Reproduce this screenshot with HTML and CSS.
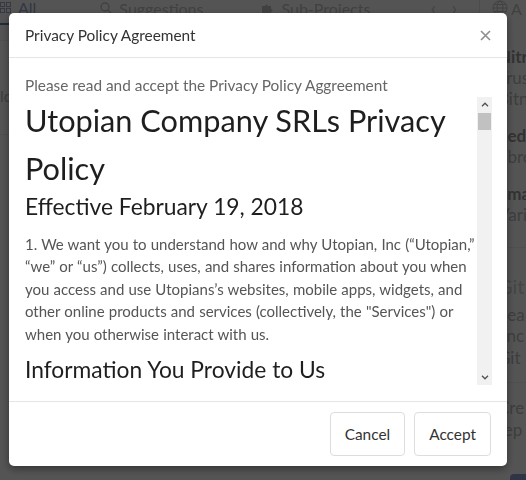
FILE: index.html
```html
<!DOCTYPE html>
<html lang="en">
<head>
    <meta charset="UTF-8">
    <meta name="viewport" content="width=device-width, initial-scale=1.0">
    <title>Privacy Policy Agreement</title>
    <link rel="stylesheet" href="styles.css">
</head>
<body>
    <div class="page">
        <nav class="tabs">
            <a class="tab active">
                <svg width="11" height="11" viewBox="0 0 12 12"><rect x="0.5" y="0.5" width="4.5" height="4.5" fill="none" stroke="currentColor"/><rect x="7" y="0.5" width="4.5" height="4.5" fill="none" stroke="currentColor"/><rect x="0.5" y="7" width="4.5" height="4.5" fill="none" stroke="currentColor"/><rect x="7" y="7" width="4.5" height="4.5" fill="none" stroke="currentColor"/></svg>
                All
            </a>
            <a class="tab">
                <svg width="12" height="12" viewBox="0 0 12 12"><circle cx="5" cy="5" r="4" fill="none" stroke="currentColor" stroke-width="1.4"/><path d="M8 8l3 3" stroke="currentColor" stroke-width="1.4"/></svg>
                Suggestions
            </a>
            <a class="tab">
                <svg width="13" height="13" viewBox="0 0 13 13"><path d="M1 4h3a1.5 1.5 0 1 1 3 0h3v3a1.5 1.5 0 1 1 0 3v3H1z" fill="currentColor"/></svg>
                Sub-Projects
            </a>
            <span class="arrows">&lsaquo;&nbsp;&nbsp;&nbsp;&rsaquo;</span>
            <a class="tab lang">
                <svg width="16" height="16" viewBox="0 0 16 16" fill="none" stroke="currentColor"><circle cx="8" cy="8" r="7"/><ellipse cx="8" cy="8" rx="3" ry="7"/><path d="M1 8h14M2 4.5h12M2 11.5h12"/></svg>
                A
            </a>
        </nav>
        <div class="main">
            <div class="filters">
                <p class="muted">lo</p>
            </div>
            <aside class="side">
                <div class="side-item"><b>Nitr</b><span>Trust c</span><span>Bitn</span></div>
                <div class="side-item"><b>Eedo</b><span>Fbre</span></div>
                <div class="side-item"><b>Smar</b><span>Vari</span></div>
                <div class="side-block">
                    <b class="faint">Git G</b>
                    <span>Sea</span><span>anc</span><span>Git</span>
                </div>
                <div class="side-block">
                    <span>Cre</span><span>rep</span>
                </div>
                <span class="side-btn"></span>
            </aside>
        </div>
    </div>

    <div class="backdrop"></div>

    <div class="modal">
        <div class="modal-header">
            <h4>Privacy Policy Agreement</h4>
            <button class="close" aria-label="Close">
                <svg width="11" height="11" viewBox="0 0 11 11"><path d="M1 1l9 9M10 1l-9 9" stroke="currentColor" stroke-width="1.6"/></svg>
            </button>
        </div>
        <div class="modal-body">
            <p class="lead">Please read and accept the Privacy Policy Aggreement</p>
            <div class="policy-box">
                <div class="policy">
                    <h1>Utopian Company SRLs Privacy Policy</h1>
                    <h2>Effective February 19, 2018</h2>
                    <p>1. We want you to understand how and why Utopian, Inc (“Utopian,” “we” or “us”) collects, uses, and shares information about you when you access and use Utopians’s websites, mobile apps, widgets, and other online products and services (collectively, the "Services") or when you otherwise interact with us.</p>
                    <h2>Information You Provide to Us</h2>
                    <p>We collect information you provide to us directly when you use the Services. This includes account information, content you submit and actions you take on the platform.</p>
                </div>
                <div class="scrollbar">
                    <span class="sb-btn">
                        <svg width="8" height="5" viewBox="0 0 8 5"><path d="M1 4.2L4 1.2l3 3" fill="none" stroke="currentColor" stroke-width="1.3"/></svg>
                    </span>
                    <div class="sb-track"><div class="sb-thumb"></div></div>
                    <span class="sb-btn">
                        <svg width="8" height="5" viewBox="0 0 8 5"><path d="M1 0.8l3 3 3-3" fill="none" stroke="currentColor" stroke-width="1.3"/></svg>
                    </span>
                </div>
            </div>
        </div>
        <div class="modal-footer">
            <button class="btn">Cancel</button>
            <button class="btn">Accept</button>
        </div>
    </div>
</body>
</html>
```

FILE: styles.css
```css
* {
    box-sizing: border-box;
}
body {
    font-family: 'Lato', 'Liberation Sans', sans-serif;
    margin: 0;
    padding: 0;
    color: #333;
    background-color: #fff;
    overflow: hidden;
    height: 480px;
}

/* page behind the dialog */
.page {
    margin-top: -9px;
    color: #bbb;
    white-space: nowrap;
}
.tabs {
    display: flex;
    align-items: center;
    height: 34px;
    font-size: 16px;
}
.tab {
    display: flex;
    align-items: center;
    gap: 7px;
    height: 34px;
    color: #c4c4c4;
}
.tab.active {
    color: #9aa6cc;
    padding-right: 2px;
    border-bottom: 2px solid #6d7fb8;
    margin-right: 62px;
}
.tab:nth-child(2) {
    margin-right: 58px;
}
.tab:nth-child(3) {
    margin-right: 60px;
}
.arrows {
    font-size: 20px;
    color: #ccc;
    padding-right: 22px;
    border-right: 1px solid #e6e6e6;
    height: 34px;
    line-height: 32px;
}
.tab.lang {
    margin-left: 12px;
    gap: 3px;
}
.main {
    display: flex;
}
.filters {
    flex: 1;
    padding-top: 45px;
    font-size: 16px;
    border-top: 1px solid #eee;
    margin-top: 15px;
    height: 95px;
    border-bottom: 1px solid #eee;
}
.muted {
    margin: 0;
}
.side {
    width: 130px;
    margin-left: -110px;
    transform: translateX(102px);
    font-size: 17px;
    padding-top: 21px;
    display: flex;
    flex-direction: column;
}
.side-item {
    display: flex;
    flex-direction: column;
    line-height: 21px;
    margin-bottom: 16px;
}
.side-item b {
    color: #999;
}
.side-block {
    display: flex;
    flex-direction: column;
    line-height: 21.5px;
    border-top: 1px solid #eee;
    padding-top: 28px;
    margin-top: 6px;
}
.side-block + .side-block {
    padding-top: 14px;
    margin-top: 14px;
}
.faint {
    font-weight: 400;
    color: #d0d0d0;
    font-size: 20px;
    margin-bottom: 6px;
}
.side-btn {
    margin-top: 34px;
    margin-left: 12px;
    width: 40px;
    height: 14px;
    border-radius: 4px;
    background: #8fa0d8;
}

.backdrop {
    position: fixed;
    inset: 0;
    background: rgba(0, 0, 0, 0.67);
}

/* dialog */
.modal {
    position: fixed;
    top: 13px;
    left: 9px;
    width: 498px;
    background: #fff;
    border-radius: 5px;
    box-shadow: 0 3px 9px rgba(0, 0, 0, 0.4);
}
.modal-header {
    display: flex;
    align-items: center;
    justify-content: space-between;
    padding: 12px 16px;
    border-bottom: 1px solid #e5e5e5;
}
.modal-header h4 {
    margin: 0;
    font-size: 15.4px;
    font-weight: 400;
    line-height: 20px;
    color: #333;
}
.close {
    background: none;
    border: none;
    padding: 0;
    color: #8e8e8e;
    display: flex;
}
.modal-body {
    padding: 16px 15px 16px 16px;
}
.lead {
    margin: 0;
    font-size: 15.4px;
    line-height: 22.5px;
    color: #666;
}
.policy-box {
    display: flex;
    height: 288px;
}
.policy {
    flex: 1;
    overflow: hidden;
    color: #555;
    font-size: 15px;
    word-spacing: 0.3px;
    line-height: 22.5px;
}
.policy h1 {
    margin: 0;
    font-size: 30.7px;
    font-weight: 400;
    word-spacing: 0;
    line-height: 48px;
    color: #1e1e1e;
}
.policy h2 {
    margin: 0 0 14px;
    font-size: 22.8px;
    font-weight: 400;
    word-spacing: 0;
    line-height: 26.4px;
    color: #1e1e1e;
}
.policy p {
    margin: 0 0 11px;
}
.scrollbar {
    width: 15px;
    display: flex;
    flex-direction: column;
    background: #f1f1f1;
}
.sb-btn {
    height: 15px;
    display: flex;
    align-items: center;
    justify-content: center;
    color: #505050;
}
.sb-track {
    flex: 1;
}
.sb-thumb {
    height: 17px;
    margin: 1px 1px 0;
    background: #c1c1c1;
}
.modal-footer {
    display: flex;
    justify-content: flex-end;
    gap: 9px;
    padding: 10px 16px;
    border-top: 1px solid #e5e5e5;
}
.btn {
    font-family: 'Lato', 'Liberation Sans', sans-serif;
    font-size: 15.4px;
    line-height: 20px;
    padding: 11px 14px;
    color: #333;
    background: #fff;
    border: 1px solid #ddd;
    border-radius: 4px;
}
```
